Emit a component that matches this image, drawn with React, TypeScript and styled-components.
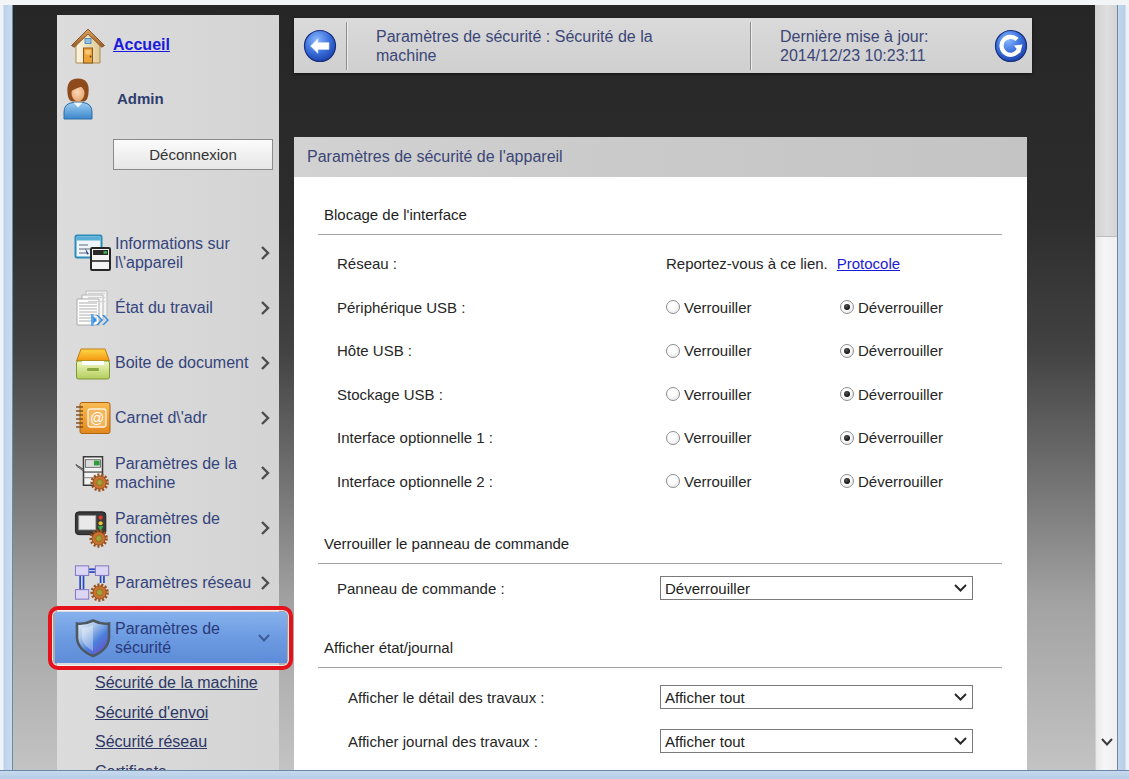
import React from "react";
import styled, { createGlobalStyle } from "styled-components";

const GlobalStyle = createGlobalStyle`
  html, body { margin: 0; padding: 0; background: #f4f5f7; overflow: hidden; }
  body { font-family: "Liberation Sans", Arial, Helvetica, sans-serif; }
  * { box-sizing: border-box; }
`;

const Window = styled.div`
  width: 1129px;
  height: 779px;
  display: flex;
  flex-direction: column;
  overflow: hidden;
`;

const TopStrip = styled.div`
  flex: none;
  height: 5px;
  background: #f3f4f6;
`;

const Middle = styled.div`
  flex: none;
  height: 765px;
  display: flex;
`;

const FrameSide = styled.div<{ $side: "left" | "right" }>`
  flex: none;
  width: ${(p) => (p.$side === "left" ? 13 : 12)}px;
  background: ${(p) =>
    p.$side === "left"
      ? "linear-gradient(90deg, #eef3f9 0px, #eef3f9 3px, #bcd2ea 4px, #c9dbef 12px)"
      : "linear-gradient(90deg, #c3d7ee 0px, #b9cfe8 7px, #e9f0f8 8px, #f2f5f9 12px)"};
  border-${(p) => (p.$side === "left" ? "right" : "left")}: 1px solid #6d87a6;
`;

const BottomFrame = styled.div`
  flex: none;
  height: 9px;
  border-top: 1px solid #6d87a6;
  background: linear-gradient(180deg, #c6d9ee, #b7cde6);
`;

const Stage = styled.div`
  flex: 1;
  display: flex;
  align-items: stretch;
  padding-left: 44px;
  overflow: hidden;
  background: linear-gradient(
    180deg,
    #262626 0%,
    #2d2d2d 28%,
    #424242 45%,
    #727272 62%,
    #a2a2a2 78%,
    #c3c3c3 100%
  );
`;

/* ---------- Sidebar ---------- */

const Sidebar = styled.nav`
  flex: none;
  width: 222px;
  margin-top: 10px;
  padding-top: 8px;
  display: flex;
  flex-direction: column;
  background: linear-gradient(90deg, #dcdcdc, #d4d4d4);

  & > * {
    flex-shrink: 0;
  }
`;

const UserRow = styled.div`
  height: 44px;
  display: flex;
  align-items: center;
  & + & {
    margin-top: 9px;
  }
`;

const UserIcon = styled.div<{ $pad: number }>`
  flex: none;
  width: 56px;
  padding-left: ${(p) => p.$pad}px;
  display: flex;
  align-items: center;
`;

const HomeLink = styled.a`
  font-size: 16px;
  font-weight: bold;
  color: #1a1ae0;
  text-decoration: underline;
  cursor: pointer;
`;

const AdminName = styled.span`
  font-size: 15px;
  font-weight: bold;
  color: #2e3d6e;
  margin-left: 4px;
`;

const LogoutButton = styled.button`
  margin: 19px 0 0 56px;
  width: 160px;
  height: 31px;
  border: 1px solid #8a8a8a;
  background: linear-gradient(180deg, #fbfbfb, #e6e6e6);
  font-family: inherit;
  font-size: 15px;
  color: #333;
  padding: 0;
`;

const Menu = styled.ul`
  list-style: none;
  margin: 55px 0 0;
  padding: 0;
`;

const MenuItem = styled.li<{ $active?: boolean }>`
  position: relative;
  height: 55px;
  display: flex;
  align-items: center;
  padding: 0 9px 0 17px;

  ${(p) =>
    p.$active &&
    `
    &::before {
      content: "";
      position: absolute;
      inset: 2px -8px 2px -2px;
      background: linear-gradient(180deg, #86b1ec 0%, #6c9be2 50%, #5e8cd8 100%);
      z-index: 0;
    }
    &::after {
      content: "";
      position: absolute;
      inset: -4px -14px -5px -9px;
      border: 4px solid #e5121b;
      border-radius: 10px;
      box-shadow: inset 0 0 0 1px rgba(255,255,255,0.7);
      z-index: 2;
    }
  `}
`;

const MenuIcon = styled.span`
  position: relative;
  z-index: 1;
  flex: none;
  width: 38px;
  margin-right: 3px;
  display: flex;
  align-items: center;
  justify-content: center;
`;

const MenuLabel = styled.span<{ $active?: boolean }>`
  position: relative;
  z-index: 1;
  flex: 1;
  font-size: 16px;
  line-height: 19px;
  color: ${(p) => (p.$active ? "#2a3a78" : "#34447c")};
`;

const MenuChevron = styled.span`
  position: relative;
  z-index: 1;
  flex: none;
  width: 12px;
  display: flex;
  justify-content: flex-end;
`;

const SubMenu = styled.div`
  margin-top: 3px;
  display: flex;
  flex-direction: column;
`;

const SubLink = styled.a`
  flex: none;
  height: 29.5px;
  line-height: 29.5px;
  padding-left: 38px;
  font-size: 16px;
  color: #2c3765;
  text-decoration: underline;
  white-space: nowrap;
`;

/* ---------- Main column ---------- */

const MainCol = styled.div`
  flex: none;
  width: 738px;
  margin: 13px 0 0 15px;
  display: flex;
  flex-direction: column;
`;

const HeaderBar = styled.header`
  flex: none;
  height: 55px;
  display: flex;
  align-items: center;
  padding: 0 4px 0 9px;
  background: linear-gradient(180deg, #dadada, #cfcfcf);
  box-shadow: 0 1px 3px rgba(0, 0, 0, 0.6);
`;

const VDivider = styled.span`
  flex: none;
  width: 2px;
  height: 48px;
  border-left: 1px solid #8e8e8e;
  border-right: 1px solid #ececec;
`;

const HeaderText = styled.div<{ $width?: number }>`
  font-size: 16px;
  line-height: 19px;
  color: #3b4677;
  ${(p) => (p.$width ? `width: ${p.$width}px;` : "")}
`;

const RoundButton = styled.span`
  flex: none;
  display: flex;
  width: 34px;
  height: 34px;
`;

const ContentPanel = styled.section`
  flex: 1;
  width: 733px;
  margin-top: 64px;
  background: #ffffff;
  display: flex;
  flex-direction: column;
`;

const PanelTitle = styled.div`
  flex: none;
  height: 40px;
  display: flex;
  align-items: center;
  padding-left: 13px;
  font-size: 16px;
  color: #3b4677;
  background: linear-gradient(90deg, #d2d2d2 0%, #cacaca 45%, #c4c4c4 100%);
`;

const PanelBody = styled.div`
  padding: 0 25px 0 24px;
`;

const SectionTitle = styled.div<{ $top: number }>`
  margin-top: ${(p) => p.$top}px;
  padding: 0 0 10px 6px;
  line-height: 19px;
  font-size: 15px;
  color: #1e1e1e;
  border-bottom: 1px solid #a3a3a3;
`;

const RowGroup = styled.div<{ $gap: number }>`
  margin-top: ${(p) => p.$gap}px;
  display: flex;
  flex-direction: column;
`;

const Row = styled.div<{ $h: number; $indent: number }>`
  height: ${(p) => p.$h}px;
  display: grid;
  grid-template-columns: ${(p) => 342 - p.$indent}px 1fr;
  align-items: center;
  padding-left: ${(p) => p.$indent}px;
  font-size: 15px;
  color: #262626;
`;

const Label = styled.span`
  white-space: nowrap;
`;

const ValueText = styled.span`
  padding-left: 6px;
  white-space: nowrap;
`;

const TextLink = styled.a`
  margin-left: 9px;
  color: #1b1bd6;
  text-decoration: underline;
`;

const Options = styled.div`
  display: grid;
  grid-template-columns: 174px auto;
`;

const Option = styled.label`
  display: flex;
  align-items: center;
  padding-left: 6px;
  gap: 4px;
  white-space: nowrap;
`;

const RadioDot = styled.span<{ $checked?: boolean }>`
  position: relative;
  flex: none;
  width: 14px;
  height: 14px;
  border-radius: 50%;
  border: 1px solid #8d8f91;
  background: radial-gradient(circle at 40% 35%, #ffffff 30%, #e3e3e3 100%);

  &::after {
    content: "";
    display: ${(p) => (p.$checked ? "block" : "none")};
    position: absolute;
    left: 3px;
    top: 3px;
    width: 6px;
    height: 6px;
    border-radius: 50%;
    background: radial-gradient(circle at 40% 35%, #555 0%, #111 70%);
  }
`;

const SelectBox = styled.div`
  width: 313px;
  height: 24px;
  border: 1px solid #7a7a7a;
  background: #fff;
  display: flex;
  align-items: center;
  justify-content: space-between;
  padding: 0 5px 0 4px;
  font-size: 15px;
  color: #222;
`;

/* ---------- Scrollbar ---------- */

const Scrollbar = styled.div`
  flex: none;
  width: 22px;
  display: flex;
  flex-direction: column;
  background: linear-gradient(90deg, #e9e9e9, #f6f6f6 40%, #f0f0f0);
  border-left: 1px solid #d0d0d0;
`;

const ScrollThumb = styled.div`
  flex: none;
  height: 232px;
  background: linear-gradient(90deg, #d2d2d2, #dedede 50%, #d4d4d4);
  border-bottom: 1px solid #bdbdbd;
`;

const ScrollTrack = styled.div`
  flex: 1;
`;

const ScrollArrow = styled.div`
  flex: none;
  height: 40px;
  display: flex;
  justify-content: center;
  padding-top: 8px;
`;

/* ---------- Icons ---------- */

const Gear = ({ x, y, r = 7 }: { x: number; y: number; r?: number }) => (
  <g transform={`translate(${x} ${y})`}>
    <circle r={r + 1.2} fill="none" stroke="#9c521e" strokeWidth="3" strokeDasharray="2.2 1.8" />
    <circle r={r} fill="#c9722f" stroke="#8a4616" strokeWidth="0.8" />
    <circle r={r * 0.45} fill="#a4a238" stroke="#6e6a1e" strokeWidth="0.6" />
  </g>
);

const HomeIcon = () => (
  <svg width="36" height="38" viewBox="0 0 36 38">
    <defs>
      <linearGradient id="hmWall" x1="0" y1="0" x2="1" y2="0">
        <stop offset="0" stopColor="#fdf6df" />
        <stop offset="1" stopColor="#dfca96" />
      </linearGradient>
      <linearGradient id="hmRoof" x1="0" y1="0" x2="0" y2="1">
        <stop offset="0" stopColor="#dba060" />
        <stop offset="1" stopColor="#9c5f26" />
      </linearGradient>
    </defs>
    <path d="M6 17 L18 6 L30 17 V37 H6 Z" fill="url(#hmWall)" stroke="#b08a50" strokeWidth="1" />
    <path d="M1.5 19.5 L18 3 L34.5 19.5 L31.8 21.2 L18 8.2 L4.2 21.2 Z" fill="url(#hmRoof)" stroke="#74451a" strokeWidth="0.8" />
    <rect x="15" y="12.5" width="6" height="5" fill="#8cc0ea" stroke="#4a7eb0" strokeWidth="0.8" />
    <rect x="13.5" y="22" width="9" height="15" fill="#eba33a" stroke="#8a5a20" strokeWidth="1" />
    <rect x="15.3" y="24" width="5.4" height="4.5" fill="#f7c774" />
    <circle cx="20.6" cy="30.5" r="0.9" fill="#6a3e10" />
  </svg>
);

const AdminIcon = () => (
  <svg width="30" height="44" viewBox="0 0 30 44">
    <defs>
      <linearGradient id="adShirt" x1="0" y1="0" x2="0" y2="1">
        <stop offset="0" stopColor="#9ccdf2" />
        <stop offset="1" stopColor="#3b86cb" />
      </linearGradient>
      <radialGradient id="adFace" cx="0.45" cy="0.4" r="0.6">
        <stop offset="0" stopColor="#fbd9b8" />
        <stop offset="1" stopColor="#e7a874" />
      </radialGradient>
    </defs>
    <path d="M1 43 V36 Q1 27.5 10 26.5 H20 Q29 27.5 29 36 V43 Z" fill="url(#adShirt)" stroke="#2f6ea8" strokeWidth="1" />
    <path d="M10.5 26.5 L15 31.5 L19.5 26.5 Z" fill="#f4f8fc" />
    <path d="M4.5 17 Q3 2.5 15 2.5 Q27 2.5 25.5 17 Q25 24.5 21 25.5 L9 25.5 Q5 24.5 4.5 17 Z" fill="#8d4a1a" />
    <ellipse cx="15" cy="17.5" rx="6.5" ry="7.8" fill="url(#adFace)" />
    <path d="M7.5 14 Q10 6.5 22.5 11 Q17 9.5 7.5 15.5 Z" fill="#8d4a1a" />
  </svg>
);

const InfoIcon = () => (
  <svg width="38" height="38" viewBox="0 0 38 38">
    <rect x="1.5" y="1.5" width="26" height="22" rx="1.5" fill="#eef6fb" stroke="#2b8cba" strokeWidth="2" />
    <rect x="2.5" y="2.5" width="24" height="4" fill="#5aaed7" />
    <line x1="5" y1="11" x2="14" y2="11" stroke="#7d8a96" strokeWidth="1.3" />
    <line x1="5" y1="15" x2="16" y2="15" stroke="#7d8a96" strokeWidth="1.3" />
    <line x1="5" y1="19" x2="13" y2="19" stroke="#7d8a96" strokeWidth="1.3" />
    <path d="M11 14 L15 20 L13 20.5 Z" fill="#2a4a80" />
    <rect x="17" y="14" width="19" height="22" rx="1.2" fill="#f4f4f4" stroke="#262626" strokeWidth="2" />
    <rect x="19" y="16" width="15" height="5" fill="#2a2a2a" />
    <rect x="29.5" y="17.2" width="3.5" height="2.5" fill="#3bbf4a" />
    <line x1="17" y1="27" x2="36" y2="27" stroke="#262626" strokeWidth="1.6" />
  </svg>
);

const JobIcon = () => (
  <svg width="38" height="38" viewBox="0 0 38 38">
    <path d="M12 2 H33 V27 H12 Z" fill="#f3f3f3" stroke="#bcbcbc" />
    <path d="M8 6 H29 V31 H8 Z" fill="#f8f8f8" stroke="#b4b4b4" />
    <path d="M3 10 H25 V36 H3 Z" fill="#ffffff" stroke="#a8a8a8" />
    {[14, 17, 20, 23, 26, 29, 32].map((y) => (
      <line key={y} x1="5" y1={y} x2="23" y2={y} stroke="#c4c4c4" strokeWidth="1.4" />
    ))}
    {[4.5, 8.5, 12.5].map((y) => (
      <line key={`t${y}`} x1="14" y1={y} x2="31" y2={y} stroke="#d2d2d2" strokeWidth="1.2" />
    ))}
    <path d="M18 26 L23 31 L18 36 Z" fill="#2f8ee4" />
    <path d="M24 26 L29 31 L24 36 L22 36 L27 31 L22 26 Z" fill="#2f8ee4" />
    <path d="M30 26 L35 31 L30 36 L28 36 L33 31 L28 26 Z" fill="#2f8ee4" />
    <rect x="17" y="25" width="2.5" height="12" fill="#59a8ee" />
  </svg>
);

const BoxIcon = () => (
  <svg width="38" height="36" viewBox="0 0 38 36">
    <defs>
      <linearGradient id="bxLid" x1="0" y1="0" x2="0" y2="1">
        <stop offset="0" stopColor="#ffd845" />
        <stop offset="1" stopColor="#f29510" />
      </linearGradient>
      <linearGradient id="bxTray" x1="0" y1="0" x2="0" y2="1">
        <stop offset="0" stopColor="#f2f8c2" />
        <stop offset="1" stopColor="#b3cc5c" />
      </linearGradient>
    </defs>
    <path d="M2.5 16 L7 4 H31 L35.5 16 Z" fill="url(#bxLid)" stroke="#c27a12" />
    <rect x="2.5" y="16" width="33" height="18" rx="2" fill="url(#bxTray)" stroke="#7d9a30" />
    <rect x="8" y="16" width="22" height="4" fill="#ffffff" />
    <rect x="13" y="23" width="12" height="3" rx="1" fill="#8aa840" />
  </svg>
);

const BookIcon = () => (
  <svg width="38" height="34" viewBox="0 0 38 34">
    <defs>
      <linearGradient id="bkCover" x1="0" y1="0" x2="0" y2="1">
        <stop offset="0" stopColor="#f9bb55" />
        <stop offset="1" stopColor="#e2871d" />
      </linearGradient>
    </defs>
    <rect x="6" y="1.5" width="30" height="31" rx="2" fill="url(#bkCover)" stroke="#ad6510" />
    {[6, 10, 14, 18, 22, 26].map((y) => (
      <line key={y} x1="2" y1={y} x2="9" y2={y} stroke="#7a4a12" strokeWidth="1.4" />
    ))}
    <rect x="14" y="8" width="18" height="18" rx="2.5" fill="#f6b45c" stroke="#fff3dc" strokeWidth="1.3" />
    <text x="23" y="22" fontSize="14" textAnchor="middle" fill="#ffffff" fontFamily="Liberation Sans, sans-serif">
      @
    </text>
  </svg>
);

const MachineIcon = () => (
  <svg width="40" height="40" viewBox="0 0 40 40">
    <path d="M10 3 H30 V33 H10 Z" fill="#f2f2f2" stroke="#3a3a3a" strokeWidth="1.6" />
    <rect x="12" y="6" width="16" height="8" fill="#dcdcdc" stroke="#555" strokeWidth="0.8" />
    <rect x="21" y="7" width="6" height="5" fill="#2f9a3a" />
    <line x1="10" y1="19" x2="30" y2="19" stroke="#3a3a3a" strokeWidth="1.2" />
    <line x1="10" y1="25" x2="30" y2="25" stroke="#777" strokeWidth="1" />
    <path d="M10 16 L2 11 L3 13 L10 18 Z" fill="#8a8a8a" stroke="#444" strokeWidth="0.8" />
    <Gear x={27} y={30} r={7} />
  </svg>
);

const FunctionIcon = () => (
  <svg width="40" height="40" viewBox="0 0 40 40">
    <rect x="1.5" y="3" width="32" height="24" rx="3.5" fill="#3a3a3a" stroke="#1e1e1e" />
    <rect x="5" y="7" width="18" height="15" fill="#e9e9e9" stroke="#9a9a9a" strokeWidth="0.8" />
    <circle cx="28" cy="9" r="2.2" fill="#e23a2a" />
    <circle cx="28" cy="15" r="2.2" fill="#f2c230" />
    <path d="M25 18 L31 18 L28 24 Z" fill="#35a845" />
    <Gear x={26} y={31} r={7} />
  </svg>
);

const NetworkIcon = () => (
  <svg width="40" height="40" viewBox="0 0 40 40">
    <rect x="1.5" y="2" width="14" height="10" fill="#dcd6f5" stroke="#7e70c2" />
    <rect x="22.5" y="2" width="14" height="10" fill="#dcd6f5" stroke="#7e70c2" />
    <rect x="1.5" y="27" width="14" height="10" fill="#dcd6f5" stroke="#7e70c2" />
    <line x1="16" y1="5.5" x2="22" y2="5.5" stroke="#2448c8" strokeWidth="1.8" />
    <line x1="16" y1="8.5" x2="22" y2="8.5" stroke="#2448c8" strokeWidth="1.8" />
    <line x1="6.5" y1="12.5" x2="6.5" y2="26.5" stroke="#2448c8" strokeWidth="1.8" />
    <line x1="10" y1="12.5" x2="10" y2="26.5" stroke="#2448c8" strokeWidth="1.8" />
    <line x1="28" y1="12.5" x2="28" y2="20" stroke="#2448c8" strokeWidth="1.8" />
    <line x1="31.5" y1="12.5" x2="31.5" y2="20" stroke="#2448c8" strokeWidth="1.8" />
    <Gear x={27} y={30} r={7} />
  </svg>
);

const ShieldIcon = () => (
  <svg width="38" height="40" viewBox="0 0 38 40">
    <defs>
      <linearGradient id="shFill" x1="0" y1="0" x2="0.8" y2="1">
        <stop offset="0" stopColor="#eef3f8" />
        <stop offset="0.35" stopColor="#a9c6e8" />
        <stop offset="0.65" stopColor="#4c7fdc" />
        <stop offset="1" stopColor="#6a4cc8" />
      </linearGradient>
    </defs>
    <path
      d="M19 2.5 Q27 6.5 35 5.5 V20 Q34 32 19 38 Q4 32 3 20 V5.5 Q11 6.5 19 2.5 Z"
      fill="url(#shFill)"
      stroke="#4e5860"
      strokeWidth="2.6"
    />
    <path d="M8 10 Q14 10 19 7 V33 Q9 28 8 20 Z" fill="#ffffff" opacity="0.35" />
  </svg>
);

const ChevronRight = () => (
  <svg width="10" height="16" viewBox="0 0 10 16">
    <polyline points="2,2 8,8 2,14" fill="none" stroke="#4d4d4d" strokeWidth="2.4" />
  </svg>
);

const ChevronDown = ({ color = "#2a2a2a", w = 13 }: { color?: string; w?: number }) => (
  <svg width={w} height="8" viewBox={`0 0 ${w} 8`}>
    <polyline points={`1,1 ${w / 2},6.5 ${w - 1},1`} fill="none" stroke={color} strokeWidth="2" />
  </svg>
);

const BackIcon = () => (
  <svg width="34" height="34" viewBox="0 0 34 34">
    <defs>
      <radialGradient id="bkBtn" cx="0.4" cy="0.3" r="0.75">
        <stop offset="0" stopColor="#8ab8ff" />
        <stop offset="0.55" stopColor="#3b70dc" />
        <stop offset="1" stopColor="#1a3ea8" />
      </radialGradient>
    </defs>
    <circle cx="17" cy="17" r="15.5" fill="url(#bkBtn)" stroke="#17307e" strokeWidth="1.2" />
    <path d="M7.5 17 L15 9.5 V13.5 H26 V20.5 H15 V24.5 Z" fill="#ffffff" stroke="#c8d8f4" strokeWidth="0.6" />
  </svg>
);

const RefreshIcon = () => (
  <svg width="34" height="34" viewBox="0 0 34 34">
    <defs>
      <radialGradient id="rfBtn" cx="0.4" cy="0.3" r="0.75">
        <stop offset="0" stopColor="#8ab8ff" />
        <stop offset="0.55" stopColor="#3b70dc" />
        <stop offset="1" stopColor="#1a3ea8" />
      </radialGradient>
    </defs>
    <circle cx="17" cy="17" r="15.5" fill="url(#rfBtn)" stroke="#17307e" strokeWidth="1.2" />
    <path d="M23 10.5 A9 9 0 1 0 24.5 21" fill="none" stroke="#ffffff" strokeWidth="4.2" />
    <path d="M20 16.5 L28.5 15.5 L26 24.5 Z" fill="#ffffff" />
  </svg>
);

/* ---------- Data ---------- */

type MenuEntry = { label: React.ReactNode; icon: React.ReactNode };

const menu: MenuEntry[] = [
  { label: <>Informations sur<br />l\'appareil</>, icon: <InfoIcon /> },
  { label: "État du travail", icon: <JobIcon /> },
  { label: "Boite de document", icon: <BoxIcon /> },
  { label: "Carnet d\\'adr", icon: <BookIcon /> },
  { label: <>Paramètres de la<br />machine</>, icon: <MachineIcon /> },
  { label: <>Paramètres de<br />fonction</>, icon: <FunctionIcon /> },
  { label: "Paramètres réseau", icon: <NetworkIcon /> },
];

const subLinks = ["Sécurité de la machine", "Sécurité d'envoi", "Sécurité réseau", "Certificats"];

const interfaces = [
  "Périphérique USB :",
  "Hôte USB :",
  "Stockage USB :",
  "Interface optionnelle 1 :",
  "Interface optionnelle 2 :",
];

const RadioPair = () => (
  <Options>
    <Option>
      <RadioDot />
      Verrouiller
    </Option>
    <Option>
      <RadioDot $checked />
      Déverrouiller
    </Option>
  </Options>
);

const Select = ({ value }: { value: string }) => (
  <SelectBox>
    <span>{value}</span>
    <ChevronDown />
  </SelectBox>
);

export default function App() {
  return (
    <>
      <GlobalStyle />
      <Window>
        <TopStrip />
        <Middle>
          <FrameSide $side="left" />
          <Stage>
            <Sidebar>
              <UserRow>
                <UserIcon $pad={13}>
                  <HomeIcon />
                </UserIcon>
                <HomeLink>Accueil</HomeLink>
              </UserRow>
              <UserRow>
                <UserIcon $pad={6}>
                  <AdminIcon />
                </UserIcon>
                <AdminName>Admin</AdminName>
              </UserRow>
              <LogoutButton>Déconnexion</LogoutButton>

              <Menu>
                {menu.map((m, i) => (
                  <MenuItem key={i}>
                    <MenuIcon>{m.icon}</MenuIcon>
                    <MenuLabel>{m.label}</MenuLabel>
                    <MenuChevron>
                      <ChevronRight />
                    </MenuChevron>
                  </MenuItem>
                ))}
                <MenuItem $active>
                  <MenuIcon>
                    <ShieldIcon />
                  </MenuIcon>
                  <MenuLabel $active>
                    Paramètres de
                    <br />
                    sécurité
                  </MenuLabel>
                  <MenuChevron>
                    <ChevronDown color="#3d5b92" w={12} />
                  </MenuChevron>
                </MenuItem>
              </Menu>
              <SubMenu>
                {subLinks.map((s) => (
                  <SubLink key={s}>{s}</SubLink>
                ))}
              </SubMenu>
            </Sidebar>

            <MainCol>
              <HeaderBar>
                <RoundButton>
                  <BackIcon />
                </RoundButton>
                <VDivider style={{ marginLeft: 9 }} />
                <HeaderText $width={300} style={{ marginLeft: 28, marginRight: 74 }}>
                  Paramètres de sécurité : Sécurité de la machine
                </HeaderText>
                <VDivider />
                <HeaderText style={{ marginLeft: 28 }}>
                  Dernière mise à jour:
                  <br />
                  2014/12/23 10:23:11
                </HeaderText>
                <RoundButton style={{ marginLeft: "auto" }}>
                  <RefreshIcon />
                </RoundButton>
              </HeaderBar>

              <ContentPanel>
                <PanelTitle>Paramètres de sécurité de l'appareil</PanelTitle>
                <PanelBody>
                  <SectionTitle $top={28}>Blocage de l'interface</SectionTitle>
                  <RowGroup $gap={7}>
                    <Row $h={43.5} $indent={19}>
                      <Label>Réseau :</Label>
                      <ValueText>
                        Reportez-vous à ce lien.
                        <TextLink>Protocole</TextLink>
                      </ValueText>
                    </Row>
                    {interfaces.map((l) => (
                      <Row key={l} $h={43.5} $indent={19}>
                        <Label>{l}</Label>
                        <RadioPair />
                      </Row>
                    ))}
                  </RowGroup>

                  <SectionTitle $top={31}>Verrouiller le panneau de commande</SectionTitle>
                  <RowGroup $gap={2}>
                    <Row $h={44} $indent={19}>
                      <Label>Panneau de commande :</Label>
                      <Select value="Déverrouiller" />
                    </Row>
                  </RowGroup>

                  <SectionTitle $top={28}>Afficher état/journal</SectionTitle>
                  <RowGroup $gap={7}>
                    <Row $h={44} $indent={30}>
                      <Label>Afficher le détail des travaux :</Label>
                      <Select value="Afficher tout" />
                    </Row>
                    <Row $h={44} $indent={30}>
                      <Label>Afficher journal des travaux :</Label>
                      <Select value="Afficher tout" />
                    </Row>
                  </RowGroup>
                </PanelBody>
              </ContentPanel>
            </MainCol>
          </Stage>
          <Scrollbar>
            <ScrollThumb />
            <ScrollTrack />
            <ScrollArrow>
              <ChevronDown color="#3a3a3a" w={12} />
            </ScrollArrow>
          </Scrollbar>
          <FrameSide $side="right" />
        </Middle>
        <BottomFrame />
      </Window>
    </>
  );
}
